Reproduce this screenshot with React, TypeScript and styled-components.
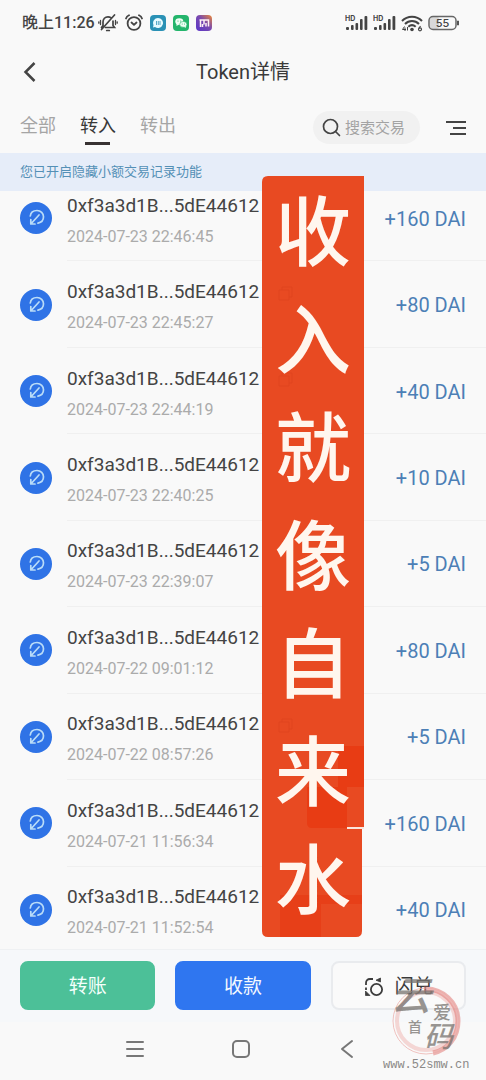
import React from "react";
import styled, { createGlobalStyle } from "styled-components";

const Global = createGlobalStyle`
  *, *::before, *::after { box-sizing: border-box; }
  body { margin: 0; background: #f9f9f9; }
  button, input { font-family: inherit; }
`;

const Screen = styled.div`
  position: relative;
  display: flex;
  flex-direction: column;
  min-height: 100vh;
  background: #f9f9f9;
  color: #3a3a3a;
  font-family: Roboto, "Noto Sans CJK SC", sans-serif;
`;

const StatusBar = styled.div`
  display: flex;
  align-items: center;
  justify-content: space-between;
  height: 46px;
  padding: 0 26px 0 22px;
`;

const StatusGroup = styled.div<{ $gap: number }>`
  display: flex;
  align-items: center;
  gap: ${(p) => p.$gap}px;
`;

const Clock = styled.span`
  font-size: 16px;
  line-height: 20px;
  font-weight: 500;
  color: #444;
`;

const Header = styled.header`
  display: grid;
  grid-template-columns: 40px 1fr 40px;
  align-items: center;
  height: 52px;
  padding: 0 20px;
`;

const Title = styled.h1`
  margin: 0;
  text-align: center;
  font-size: 20px;
  line-height: 24px;
  font-weight: 400;
`;

const IconButton = styled.button`
  display: flex;
  padding: 0;
  border: 0;
  background: none;
  color: #444;
`;

const Filters = styled.div`
  display: flex;
  align-items: center;
  height: 55px;
  padding: 0 20px;
`;

const Tabs = styled.div`
  display: flex;
  gap: 24px;
  margin-right: auto;
`;

const Tab = styled.button<{ $active?: boolean }>`
  position: relative;
  padding: 0;
  border: 0;
  background: none;
  font-size: 18px;
  line-height: 28px;
  color: ${(p) => (p.$active ? "#383838" : "#a5a5a5")};
  &::after {
    content: "";
    position: absolute;
    left: 5px;
    right: 6px;
    bottom: -5px;
    height: 3px;
    background: ${(p) => (p.$active ? "#383232" : "transparent")};
  }
`;

const Tools = styled.div`
  display: flex;
  align-items: center;
  gap: 25px;
  padding-top: 4px;
`;

const Search = styled.label`
  display: flex;
  align-items: center;
  gap: 4px;
  width: 107px;
  height: 33px;
  padding: 0 12px 0 9px;
  border-radius: 17px;
  background: #f1f1f1;
  color: #444;
`;

const SearchInput = styled.input`
  flex: 1;
  min-width: 0;
  padding: 0;
  border: 0;
  outline: 0;
  background: none;
  font-size: 15px;
  &::placeholder { color: #a3a3a3; }
`;

const Notice = styled.div`
  height: 38px;
  padding: 0 20px;
  background: #e6edf9;
  color: #5490b6;
  font-size: 13px;
  line-height: 38px;
`;

const Viewport = styled.main`
  flex: 1;
  display: flex;
  overflow: hidden;
`;

const List = styled.ul`
  flex: 1;
  display: grid;
  grid-auto-rows: 1fr;
  margin: -16px 0 -4px;
  padding: 0;
  list-style: none;
`;

const Row = styled.li`
  display: flex;
  align-items: center;
  gap: 15px;
  min-height: 80px;
  padding-left: 20px;
`;

const Badge = styled.svg`
  flex: none;
  border-radius: 50%;
  background: #2f73e6;
`;

const RowBody = styled.div`
  flex: 1;
  align-self: stretch;
  display: flex;
  align-items: center;
  justify-content: space-between;
  padding: 2px 20px 0 0;
  border-bottom: 1px solid #f0f0f0;
`;

const Details = styled.div`
  padding-top: 4px;
`;

const Address = styled.div`
  font-size: 19px;
  line-height: 26px;
  color: #444;
`;

const Time = styled.div`
  margin-top: 6px;
  font-size: 16px;
  line-height: 24px;
  color: #ababab;
`;

const Amount = styled.span`
  font-size: 20px;
  line-height: 26px;
  color: #4c7fb6;
`;

const Actions = styled.footer`
  display: grid;
  grid-template-columns: repeat(3, 1fr);
  gap: 20px;
  height: 73px;
  padding: 11px 20px 12px;
  border-top: 1px solid #eff1f3;
  background: #f6f8fa;
`;

const Action = styled.button<{ $bg: string; $fg: string; $line: string }>`
  display: flex;
  align-items: center;
  justify-content: center;
  gap: 11px;
  padding: 2px 0 0;
  border: 2px solid ${(p) => p.$line};
  border-radius: 8px;
  background: ${(p) => p.$bg};
  color: ${(p) => p.$fg};
  font-size: 19px;
  line-height: 24px;
`;

const SystemNav = styled.nav`
  display: flex;
  align-items: center;
  justify-content: center;
  gap: 86px;
  height: 58px;
  padding: 0 4px 4px 0;
`;

const Ribbon = styled.div`
  position: absolute;
  top: 176px;
  left: 262px;
  width: 102px;
  height: 761px;
`;

const RibbonShape = styled.svg`
  display: block;
  width: 100%;
  height: 100%;
`;

const RibbonText = styled.div`
  position: absolute;
  inset: 0;
  display: flex;
  flex-direction: column;
  align-items: center;
  padding-top: 4px;
  color: #fff6ee;
  font-size: 76px;
  line-height: 108px;
  font-weight: 500;
`;

const Watermark = styled.svg`
  position: absolute;
  right: 14px;
  bottom: 6px;
  overflow: visible;
  pointer-events: none;
`;

const Signal = () => (
  <svg width="23" height="16" viewBox="0 0 23 16" fill="#444" aria-hidden="true">
    <text x="0" y="6" fontSize="7" fontWeight="700" fontFamily="Inter, sans-serif">HD</text>
    <rect x="1" y="12" width="3" height="3" rx="1" />
    <rect x="6" y="10" width="2.600" height="5" rx="1" />
    <rect x="10.500" y="8" width="2.600" height="7" rx="1" />
    <rect x="15" y="4" width="2.600" height="11" rx="1" />
    <rect x="19.500" y="1" width="2.800" height="14" rx="1" />
  </svg>
);

const MutedBell = () => (
  <svg width="20" height="18" viewBox="0 0 20 18" fill="none" stroke="#444" strokeWidth="1.700" strokeLinecap="round" aria-hidden="true">
    <path d="M3.500 13.500L5 11.500V8C5 5 7 2.800 10 2.800C11 2.800 12 3 12.800 3.600M15 7V11.500L16.500 13.500H7.500M8.700 16.500H11.300M16.500 1L3.500 15.500" />
    <path d="M2.500 6.500V10.500M.8 7.800V9.200M17.500 6.500V10.500M19.200 7.800V9.200" strokeWidth="1.300" />
  </svg>
);

const Alarm = () => (
  <svg width="18" height="18" viewBox="0 0 18 18" fill="none" stroke="#444" strokeWidth="1.800" strokeLinecap="round" strokeLinejoin="round" aria-hidden="true">
    <circle cx="9" cy="9.500" r="6.400" />
    <path d="M1 4.500C1.500 3 2.500 2 4 1.300M17 4.500C16.500 3 15.500 2 14 1.300M6.500 8.500L9 10.800L11.500 8.500" />
  </svg>
);

const ChatApp = () => (
  <svg width="16" height="16" viewBox="0 0 16 16" aria-hidden="true">
    <rect width="16" height="16" rx="4" fill="#2a91b5" />
    <path d="M8 3a5 5 0 1 1-3 9L3 12.500L3.500 10A5 5 0 0 1 8 3Z" fill="#e7fbff" />
    <path d="M6.500 6V10M8.300 6V10M10 6V10" stroke="#58a9c6" />
  </svg>
);

const WeChat = () => (
  <svg width="16" height="16" viewBox="0 0 16 16" aria-hidden="true">
    <rect width="16" height="16" rx="4" fill="#24b56c" />
    <ellipse cx="6.300" cy="6.600" rx="4" ry="3.300" fill="#effff5" />
    <path d="M3.500 8L3.500 11L6 9.500Z" fill="#effff5" />
    <ellipse cx="10.300" cy="9.400" rx="3.600" ry="2.900" fill="#effff5" stroke="#24b56c" strokeWidth=".6" />
    <path d="M11 11.500L12.800 13V10.500Z" fill="#effff5" />
    <g fill="#24b56c">
      <circle cx="5" cy="6" r=".6" />
      <circle cx="7.700" cy="6" r=".6" />
      <circle cx="9.200" cy="9" r=".5" />
      <circle cx="11.500" cy="9" r=".5" />
    </g>
  </svg>
);

const PurpleApp = () => (
  <svg width="16" height="16" viewBox="0 0 16 16" aria-hidden="true">
    <defs>
      <linearGradient id="purple" x1="0" y1="1" x2="1" y2="0">
        <stop offset="0" stopColor="#5a35c9" />
        <stop offset=".55" stopColor="#7a4aae" />
        <stop offset="1" stopColor="#ee8a35" />
      </linearGradient>
    </defs>
    <rect width="16" height="16" rx="4" fill="url(#purple)" />
    <path d="M3.500 5H12.500V11.500M4.500 5V12M8 5V9.500M6.500 9V12M10 8V11.500" fill="none" stroke="#fff0f4" strokeWidth="1.500" />
  </svg>
);

const Wifi = () => (
  <svg width="22" height="17" viewBox="0 0 22 17" fill="none" stroke="#444" strokeWidth="2" aria-hidden="true">
    <path d="M1 6C6.500 .3 15.500 .3 21 6M4 9C8 5 14 5 18 9M7.300 11.800C9.500 9.800 12.500 9.800 14.700 11.800" />
    <circle cx="11" cy="14.500" r="1.800" fill="#444" stroke="none" />
    <path d="M3.500 11.500L1.500 14.500H5M4 12.500V16M6.500 12V15.500" strokeWidth="1" />
    <path d="M19.500 11L17.800 13.500" strokeWidth="1.200" />
    <circle cx="19" cy="14.300" r="1.500" strokeWidth="1.200" />
  </svg>
);

const Battery = () => (
  <svg width="32" height="16" viewBox="0 0 32 16" aria-hidden="true">
    <rect x="2" y="2" width="9" height="12" rx="2" fill="#d9d9d9" />
    <rect x="1" y="1.500" width="27" height="13" rx="4" fill="none" stroke="#666" strokeWidth="1.500" />
    <path d="M29.500 6H30.500V10H29.500Z" fill="#555" stroke="#555" />
    <text x="14.500" y="12" textAnchor="middle" fontSize="11" fontWeight="500" fontFamily="Inter, sans-serif" fill="#444">55</text>
  </svg>
);

const ReceiveBadge = () => (
  <Badge width="32" height="32" viewBox="0 0 32 32" fill="none" stroke="#b9dcf8" strokeWidth="1.700" strokeLinecap="round" strokeLinejoin="round" aria-hidden="true">
    <path d="M10.300 14C10.700 10.500 13.500 8.500 17 8.500C20.800 8.500 23.500 11.300 23.500 14.800C23.500 18 21.300 20.500 18 21.200" />
    <path d="M19 13L11.500 21.200M10.800 17.500V22H15" />
  </Badge>
);

const SwapIcon = () => (
  <svg width="20" height="20" viewBox="0 0 20 20" fill="none" stroke="#3c3c3c" strokeWidth="1.800" aria-hidden="true">
    <circle cx="12.500" cy="12.500" r="5.600" />
    <path d="M2 8V6C2 3.500 3.500 2 6 2H9M2 10.500V13" />
    <path d="M12 3.200L16.500 1V5Z" fill="#3c3c3c" strokeWidth=".8" />
    <path d="M1.500 14V18.500H6Z" fill="#3c3c3c" strokeWidth=".8" />
  </svg>
);

const rows = [
  ["2024-07-23 22:46:45", "+160 DAI"],
  ["2024-07-23 22:45:27", "+80 DAI"],
  ["2024-07-23 22:44:19", "+40 DAI"],
  ["2024-07-23 22:40:25", "+10 DAI"],
  ["2024-07-23 22:39:07", "+5 DAI"],
  ["2024-07-22 09:01:12", "+80 DAI"],
  ["2024-07-22 08:57:26", "+5 DAI"],
  ["2024-07-21 11:56:34", "+160 DAI"],
  ["2024-07-21 11:52:54", "+40 DAI"],
];

const copyMarks = [111, 197, 543];

export default function App() {
  return (
    <Screen>
      <Global />
      <StatusBar>
        <StatusGroup $gap={3}>
          <Clock>晚上11:26</Clock>
          <StatusGroup $gap={7}>
            <MutedBell />
            <Alarm />
            <ChatApp />
            <WeChat />
            <PurpleApp />
          </StatusGroup>
        </StatusGroup>
        <StatusGroup $gap={5}>
          <Signal />
          <Signal />
          <Wifi />
          <Battery />
        </StatusGroup>
      </StatusBar>
      <Header>
        <IconButton aria-label="返回">
          <svg width="20" height="22" viewBox="0 0 20 22" fill="none" stroke="currentColor" strokeWidth="2.500">
            <path d="M14.500 2L5.500 11L14.500 20" />
          </svg>
        </IconButton>
        <Title>Token详情</Title>
      </Header>
      <Filters>
        <Tabs>
          <Tab>全部</Tab>
          <Tab $active>转入</Tab>
          <Tab>转出</Tab>
        </Tabs>
        <Tools>
          <Search>
            <svg width="19" height="19" viewBox="0 0 19 19" fill="none" stroke="currentColor" strokeWidth="1.700" strokeLinecap="round" aria-hidden="true">
              <circle cx="8.500" cy="8.500" r="7" />
              <path d="M13.500 13.500L17.500 17.500" />
            </svg>
            <SearchInput placeholder="搜索交易" aria-label="搜索交易" />
          </Search>
          <IconButton aria-label="筛选">
            <svg width="21" height="16" viewBox="0 0 21 16" stroke="currentColor" strokeWidth="2" aria-hidden="true">
              <path d="M1 2H21M8 8H21M5 14H21" />
            </svg>
          </IconButton>
        </Tools>
      </Filters>
      <Notice>您已开启隐藏小额交易记录功能</Notice>
      <Viewport>
        <List>
          {rows.map(([time, amount]) => (
            <Row key={time}>
              <ReceiveBadge />
              <RowBody>
                <Details>
                  <Address>0xf3a3d1B...5dE44612</Address>
                  <Time>{time}</Time>
                </Details>
                <Amount>{amount}</Amount>
              </RowBody>
            </Row>
          ))}
        </List>
      </Viewport>
      <Actions>
        <Action $bg="#4cc098" $fg="#f4fffb" $line="#4cc098">转账</Action>
        <Action $bg="#2f76f0" $fg="#f4f9ff" $line="#2f76f0">收款</Action>
        <Action $bg="#fafafa" $fg="#3a3a3a" $line="#e9ebee">
          <SwapIcon />
          闪兑
        </Action>
      </Actions>
      <SystemNav>
        <IconButton aria-label="最近任务">
          <svg width="20" height="20" viewBox="0 0 20 20" stroke="#777" strokeWidth="2" strokeLinecap="round">
            <path d="M2 3H18M2 10H18M2 17H18" />
          </svg>
        </IconButton>
        <IconButton aria-label="主屏幕">
          <svg width="20" height="20" viewBox="0 0 20 20" fill="none" stroke="#777" strokeWidth="2">
            <rect x="2" y="2" width="16" height="16" rx="4" />
          </svg>
        </IconButton>
        <IconButton aria-label="后退">
          <svg width="20" height="20" viewBox="0 0 20 20" fill="none" stroke="#777" strokeWidth="2" strokeLinecap="round" strokeLinejoin="round">
            <path d="M15 2L5 10L15 18" />
          </svg>
        </IconButton>
      </SystemNav>
      <Ribbon>
        <RibbonShape viewBox="0 0 102 761" preserveAspectRatio="none" aria-hidden="true">
          <path d="M6 0H102V652H100V755Q100 761 94 761H6Q0 761 0 755V6Q0 0 6 0Z" fill="#e84a22" />
          <path d="M85 570H102V611H85V652H50Q45 652 45 647V611H76V570Z" fill="#e83c14" />
          <path d="M18 719H100V728H59V761H18Z" fill="#e73c16" opacity=".75" />
          <path d="M85 652H102" stroke="#fbe6dd" strokeWidth="2" />
          <g fill="none" stroke="#e0441e" strokeWidth="1">
            {copyMarks.map((y) => (
              <path key={y} d={`M17 ${y + 3}H27V${y + 13}H17ZM20 ${y + 3}V${y}H30V${y + 10}H27`} />
            ))}
          </g>
        </RibbonShape>
        <RibbonText>
          {[..."收入就像自来水"].map((c) => (
            <span key={c}>{c}</span>
          ))}
        </RibbonText>
      </Ribbon>
      <Watermark width="92" height="104" viewBox="380 970 92 104" aria-label="www.52smw.cn">
        <g fill="none">
          <circle cx="426" cy="1021" r="29" stroke="#eeaaa6" strokeWidth="4" opacity=".45" />
          <path d="M424 989C443 988 458 1003 458 1021C458 1038 447 1050 433 1053" stroke="#df6f6b" strokeWidth="5" opacity=".5" />
          <circle cx="426" cy="1021" r="33" stroke="#eba9a5" opacity=".7" />
        </g>
        <g fill="#77736f" opacity=".75" fontFamily="'Noto Sans CJK SC', sans-serif" fontWeight="500">
          <text x="391" y="1010" fontSize="40" fontStyle="italic">云</text>
          <text x="408" y="1032" fontSize="14">首</text>
          <text x="433" y="1019" fontSize="18">爱</text>
          <text x="424" y="1047" fontSize="29" fontStyle="italic">码</text>
        </g>
        <text x="383" y="1068" fontSize="12" fontFamily="'Liberation Mono', monospace" fill="#8b8987">www.52smw.cn</text>
      </Watermark>
    </Screen>
  );
}
